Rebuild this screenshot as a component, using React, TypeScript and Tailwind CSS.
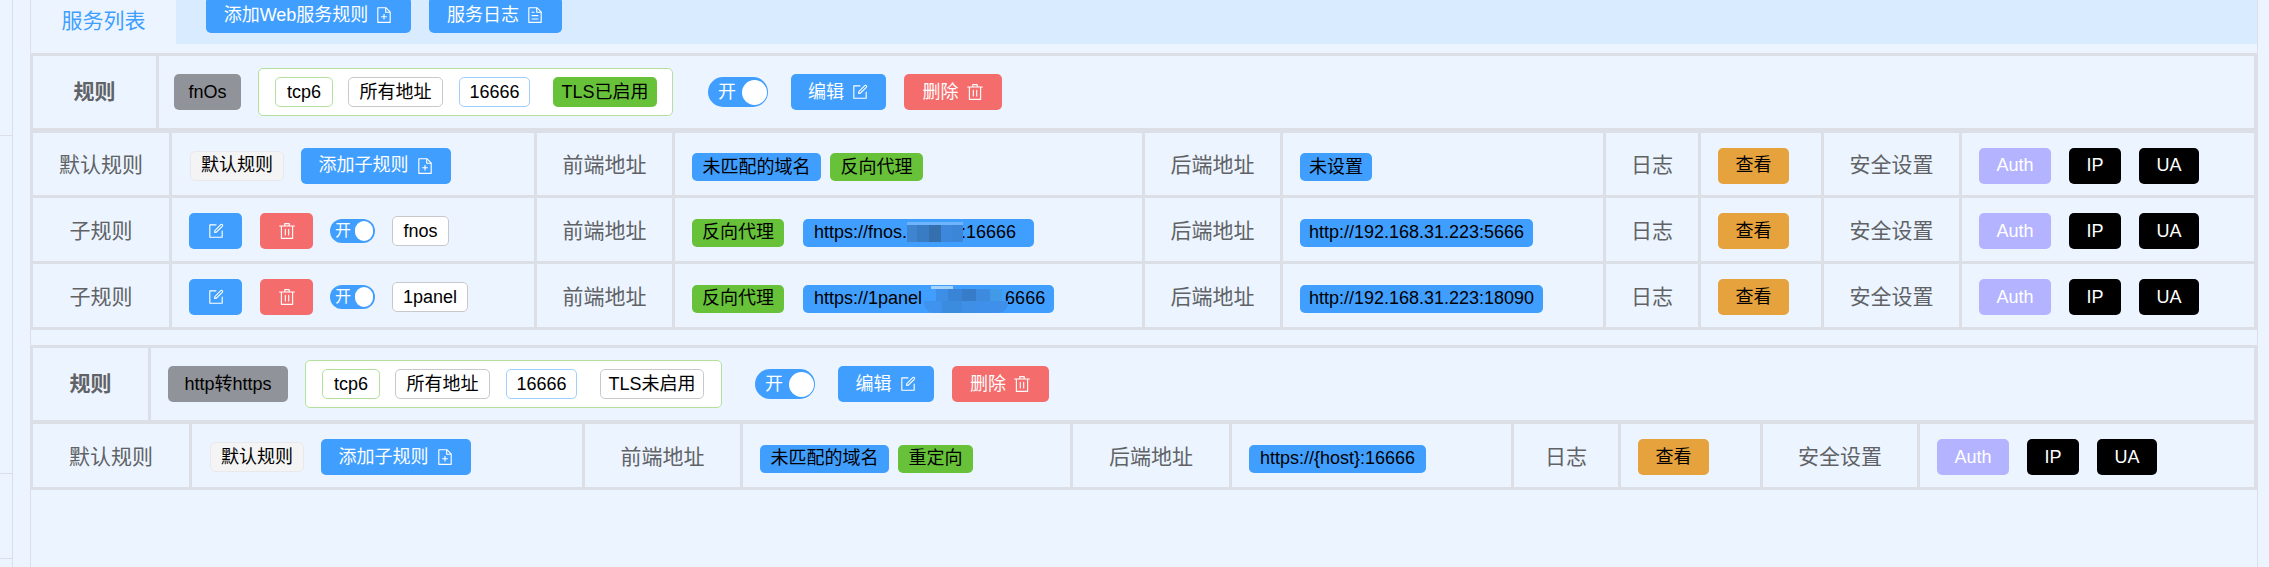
import * as React from 'react'

const fontStack = "[font-family:'Liberation_Sans','Noto_Sans_CJK_SC',sans-serif]"

const iconPaths = {
  edit: 'M832 512a32 32 0 1 1 64 0v352a32 32 0 0 1-32 32H160a32 32 0 0 1-32-32V160a32 32 0 0 1 32-32h352a32 32 0 0 1 0 64H192v640h640zM469.952 554.24l52.8-7.552L847.104 222.4a32 32 0 1 0-45.248-45.248L477.44 501.44l-7.552 52.8zm422.4-422.4a96 96 0 0 1 0 135.808l-331.84 331.84a32 32 0 0 1-18.112 9.088L436.8 623.68a32 32 0 0 1-36.224-36.224l15.104-105.6a32 32 0 0 1 9.024-18.112l331.904-331.84a96 96 0 0 1 135.744 0z',
  trash: 'M160 256H96a32 32 0 0 1 0-64h256V95.936a32 32 0 0 1 32-32h256a32 32 0 0 1 32 32V192h256a32 32 0 1 1 0 64h-64v672a32 32 0 0 1-32 32H192a32 32 0 0 1-32-32zm448-64v-64H416v64zM224 896h576V256H224zm192-128a32 32 0 0 1-32-32V416a32 32 0 0 1 64 0v320a32 32 0 0 1-32 32m192 0a32 32 0 0 1-32-32V416a32 32 0 0 1 64 0v320a32 32 0 0 1-32 32',
  docAdd: 'M832 384H576V128H192v768h640zm-26.496-64L640 154.496V320zM160 64h480l256 256v608a32 32 0 0 1-32 32H160a32 32 0 0 1-32-32V96a32 32 0 0 1 32-32m320 512V448h64v128h128v64H544v128h-64V640H352v-64z',
  doc: 'M832 384H576V128H192v768h640zm-26.496-64L640 154.496V320zM160 64h480l256 256v608a32 32 0 0 1-32 32H160a32 32 0 0 1-32-32V96a32 32 0 0 1 32-32m160 448h384v64H320zm0-192h160v64H320zm0 384h384v64H320z',
}

type IconName = keyof typeof iconPaths

function Icon({ name }: { name: IconName }) {
  return (
    <svg viewBox="0 0 1024 1024" className="w-[18px] h-[18px] shrink-0" fill="currentColor">
      <path d={iconPaths[name]} />
    </svg>
  )
}

function Btn({ className, icon, children }: { className: string; icon?: IconName; children?: React.ReactNode }) {
  return (
    <div className={`flex items-center justify-center gap-[7px] h-[36px] rounded-[5px] text-[18px] shrink-0 ${className}`}>
      {children}
      {icon && <Icon name={icon} />}
    </div>
  )
}

function Tag({ className, children }: { className: string; children: React.ReactNode }) {
  return (
    <div className={`flex items-center justify-center rounded-[5px] text-[18px] text-black shrink-0 whitespace-nowrap ${className}`}>
      {children}
    </div>
  )
}

function Toggle({ small }: { small?: boolean }) {
  return (
    <div className={`flex items-center justify-between rounded-full bg-[#409eff] text-white shrink-0 ${small ? 'w-[45px] h-[24px] pl-[5px] pr-[2px] text-[16px]' : 'w-[60px] h-[30px] pl-[10px] pr-[1px] text-[18px]'}`}>
      <span>开</span>
      <span className={`rounded-full bg-white ${small ? 'w-[18px] h-[20px]' : 'w-[25px] h-[25px]'}`} />
    </div>
  )
}

function Label({ children }: { children: React.ReactNode }) {
  return (
    <div className="flex items-center justify-center bg-[#ecf5ff] text-[21px] text-[#606266] pt-[2px]">{children}</div>
  )
}

function Cell({ className = '', children }: { className?: string; children: React.ReactNode }) {
  return <div className={`flex items-center bg-[#ecf5ff] pl-[17px] ${className}`}>{children}</div>
}

const blue = 'h-[28px] bg-[#409eff]'
const green = 'h-[28px] bg-[#67c23a]'

function RuleTable({ titleClass, nameWidth, contentPad, name, nameTagClass, tls, tlsOn, boxClass, toggleGap, editWidth, deleteWidth, rows }: {
  titleClass: string
  nameWidth: string
  contentPad: string
  name: string
  nameTagClass: string
  tls: string
  tlsOn: boolean
  boxClass: string
  toggleGap: string
  editWidth: string
  deleteWidth: string
  rows: React.ReactNode
}) {
  return (
    <div className="flex flex-col bg-[#dcdfe6] p-[3px] -ml-px">
      <div className={`flex gap-[3px] h-[72px] ${titleClass}`}>
        <div className={`flex items-center justify-center bg-[#ecf5ff] text-[21px] font-bold text-[#606266] ${nameWidth}`}>规则</div>
        <div className={`flex-1 flex items-center bg-[#ecf5ff] ${contentPad}`}>
          <Tag className={`h-[36px] bg-[#909399] ${nameTagClass}`}>{name}</Tag>
          <div className={`flex items-center h-[48px] bg-white border border-[#b3e19d] rounded-[5px] pl-[16px] ml-[17px] ${boxClass}`}>
            <Tag className="w-[58px] h-[30px] bg-white border border-[#b3e19d]">tcp6</Tag>
            <Tag className="w-[95px] h-[30px] bg-white border border-[#c8c9cc] ml-[15px]">所有地址</Tag>
            <Tag className="w-[71px] h-[30px] bg-white border border-[#a0cfff] ml-[16px]">16666</Tag>
            {tlsOn ? (
              <Tag className="w-[104px] h-[30px] bg-[#67c23a] ml-[23px]">{tls}</Tag>
            ) : (
              <Tag className="w-[104px] h-[30px] bg-white border border-[#c8c9cc] ml-[23px]">{tls}</Tag>
            )}
          </div>
          <div className={toggleGap}><Toggle /></div>
          <Btn className={`ml-[23px] bg-[#409eff] text-white ${editWidth}`} icon="edit">编辑</Btn>
          <Btn className={`ml-[18px] bg-[#f56c6c] text-white ${deleteWidth}`} icon="trash">删除</Btn>
        </div>
      </div>
      {rows}
    </div>
  )
}

function SafetyButtons() {
  return (
    <>
      <Btn className="w-[72px] bg-[#b3b3ff] text-white">Auth</Btn>
      <Btn className="w-[52px] ml-[18px] bg-black text-white">IP</Btn>
      <Btn className="w-[60px] ml-[18px] bg-black text-white">UA</Btn>
    </>
  )
}

function Row({ grid, height = 'h-[63px]', label, lead, front, back }: {
  grid: string
  height?: string
  label: string
  lead: React.ReactNode
  front: React.ReactNode
  back: React.ReactNode
}) {
  return (
    <div className={`grid gap-x-[3px] ${height} ${grid}`}>
      <Label>{label}</Label>
      <Cell className="pt-[3px]">{lead}</Cell>
      <Label>前端地址</Label>
      <Cell className="pt-[6px]">{front}</Cell>
      <Label>后端地址</Label>
      <Cell className="pt-[6px]">{back}</Cell>
      <Label>日志</Label>
      <Cell className="pt-[3px]"><Btn className="w-[71px] bg-[#e6a23c] text-black">查看</Btn></Cell>
      <Label>安全设置</Label>
      <Cell className="pt-[3px]"><SafetyButtons /></Cell>
    </div>
  )
}

function DefaultLead() {
  return (
    <>
      <Tag className="w-[94px] h-[30px] bg-[#f4f4f5] border border-[#e9e9eb] ml-px">默认规则</Tag>
      <Btn className="w-[150px] ml-[17px] bg-[#409eff] text-white" icon="docAdd">添加子规则</Btn>
    </>
  )
}

function ChildLead({ name, width }: { name: string; width: string }) {
  return (
    <>
      <Btn className="w-[53px] bg-[#409eff] text-white" icon="edit" />
      <Btn className="w-[53px] ml-[18px] bg-[#f56c6c] text-white" icon="trash" />
      <div className="ml-[17px]"><Toggle small /></div>
      <Tag className={`h-[30px] bg-white border border-[#c8c9cc] ml-[17px] ${width}`}>{name}</Tag>
    </>
  )
}

// the domain is pixelated in the screenshot
function MosaicOne() {
  return (
    <span className="relative w-[56px] h-[28px] shrink-0 -ml-[2px]">
      <span className="absolute left-[2px] top-[3px] w-[56px] h-[4px] bg-[#6fb4ff]" />
      <span className="absolute left-[2px] top-[6px] w-[56px] h-[17px] flex">
        <span className="w-[10px] bg-[#3f84d0]" />
        <span className="w-[12px] bg-[#3a7cc4]" />
        <span className="w-[12px] bg-[#3370ad]" />
        <span className="w-[11px] bg-[#3d88dc]" />
        <span className="w-[11px] bg-[#3c86d8]" />
      </span>
    </span>
  )
}

function MosaicTwo() {
  return (
    <span className="relative w-[71px] h-[28px] shrink-0 ml-[2px]">
      <span className="absolute left-[7px] top-[1px] w-[22px] h-[4px] bg-[#a9d3ff]" />
      <span className="absolute left-[2px] top-[4px] w-[76px] h-[12px] flex">
        <span className="w-[10px] bg-[#409eff]" />
        <span className="w-[12px] bg-[#3f8ee6]" />
        <span className="w-[14px] bg-[#3a84d8]" />
        <span className="w-[14px] bg-[#367cc8]" />
        <span className="w-[14px] bg-[#3d8ade]" />
        <span className="w-[12px] bg-[#409ae8]" />
      </span>
      <span className="absolute left-0 top-[16px] w-[84px] h-[12px] flex rounded-b-[10px] overflow-hidden">
        <span className="w-[18px] bg-[#3f92ee]" />
        <span className="w-[20px] bg-[#3b8bdf]" />
        <span className="w-[16px] bg-[#3f8fe6]" />
        <span className="w-[30px] bg-[#3e90ea]" />
      </span>
    </span>
  )
}

const gridOne = 'grid-cols-[136px_362px_135px_467px_135px_320px_92px_120px_135px_292px]'
const gridTwo = 'grid-cols-[156px_390px_155px_327px_156px_279px_104px_139px_154px_334px]'

export default function App() {
  return (
    <div className={`flex h-[567px] w-full overflow-hidden bg-[#ecf5ff] ${fontStack}`}>
      {/* left rail, only its edge is in the crop */}
      <div className="w-[13px] shrink-0 border-r border-[#dcdfe6] flex flex-col">
        <div className="h-[136px] border-b border-[#dcdfe6] shrink-0" />
        <div className="h-[338px] border-b border-[#dcdfe6] shrink-0" />
        <div className="h-[85px] border-b border-[#dcdfe6] shrink-0" />
      </div>

      <div className="w-[2228px] ml-[17px] shrink-0 border-x border-[#dcdfe6]">
        {/* Tabs */}
        <div className="flex h-[44px] mb-[9px]">
          <div className="w-[145px] flex items-center justify-center text-[21px] text-[#409eff] pb-[2px]">服务列表</div>
          <div className="flex-1 flex bg-[#d9ecff] pl-[30px] h-[44px]">
            <Btn className="w-[205px] -mt-[3px] bg-[#409eff] text-white" icon="docAdd">添加Web服务规则</Btn>
            <Btn className="w-[133px] -mt-[3px] ml-[18px] bg-[#409eff] text-white" icon="doc">服务日志</Btn>
          </div>
        </div>

        {/* fnOs */}
        <div className="mb-[15px]">
          <RuleTable
            titleClass="mb-[5px]"
            nameWidth="w-[123px]"
            contentPad="pl-[15px]"
            name="fnOs"
            nameTagClass="w-[67px]"
            tls="TLS已启用"
            tlsOn
            boxClass="w-[415px]"
            toggleGap="ml-[35px]"
            editWidth="w-[95px]"
            deleteWidth="w-[98px]"
            rows={
              <div className="flex flex-col gap-y-[3px]">
                <Row
                  grid={gridOne}
                  height="h-[62px]"
                  label="默认规则"
                  lead={<DefaultLead />}
                  front={
                    <>
                      <Tag className={`w-[129px] ${blue}`}>未匹配的域名</Tag>
                      <Tag className={`w-[93px] ml-[9px] ${green}`}>反向代理</Tag>
                    </>
                  }
                  back={<Tag className={`w-[72px] ${blue}`}>未设置</Tag>}
                />
                <Row
                  grid={gridOne}
                  label="子规则"
                  lead={<ChildLead name="fnos" width="w-[57px]" />}
                  front={
                    <>
                      <Tag className={`w-[92px] ${green}`}>反向代理</Tag>
                      <Tag className={`w-[231px] ml-[19px] justify-start pl-[11px] ${blue}`}>
                        https://fnos.<MosaicOne />:16666
                      </Tag>
                    </>
                  }
                  back={<Tag className={`w-[233px] ${blue}`}>http://192.168.31.223:5666</Tag>}
                />
                <Row
                  grid={gridOne}
                  label="子规则"
                  lead={<ChildLead name="1panel" width="w-[76px]" />}
                  front={
                    <>
                      <Tag className={`w-[92px] ${green}`}>反向代理</Tag>
                      <Tag className={`w-[251px] ml-[19px] justify-start pl-[11px] ${blue}`}>
                        https://1panel<MosaicTwo />16666
                      </Tag>
                    </>
                  }
                  back={<Tag className={`w-[243px] ${blue}`}>http://192.168.31.223:18090</Tag>}
                />
              </div>
            }
          />
        </div>

        {/* http转https */}
        <RuleTable
          titleClass="mb-[4px]"
          nameWidth="w-[115px]"
          contentPad="pl-[17px]"
          name="http转https"
          nameTagClass="w-[120px]"
          tls="TLS未启用"
          tlsOn={false}
          boxClass="w-[417px]"
          toggleGap="ml-[33px]"
          editWidth="w-[96px]"
          deleteWidth="w-[97px]"
          rows={
            <Row
              grid={gridTwo}
              label="默认规则"
              lead={<DefaultLead />}
              front={
                <>
                  <Tag className={`w-[129px] ${blue}`}>未匹配的域名</Tag>
                  <Tag className={`w-[75px] ml-[9px] ${green}`}>重定向</Tag>
                </>
              }
              back={<Tag className={`w-[177px] ${blue}`}>https://{'{host}'}:16666</Tag>}
            />
          }
        />
      </div>
    </div>
  )
}
